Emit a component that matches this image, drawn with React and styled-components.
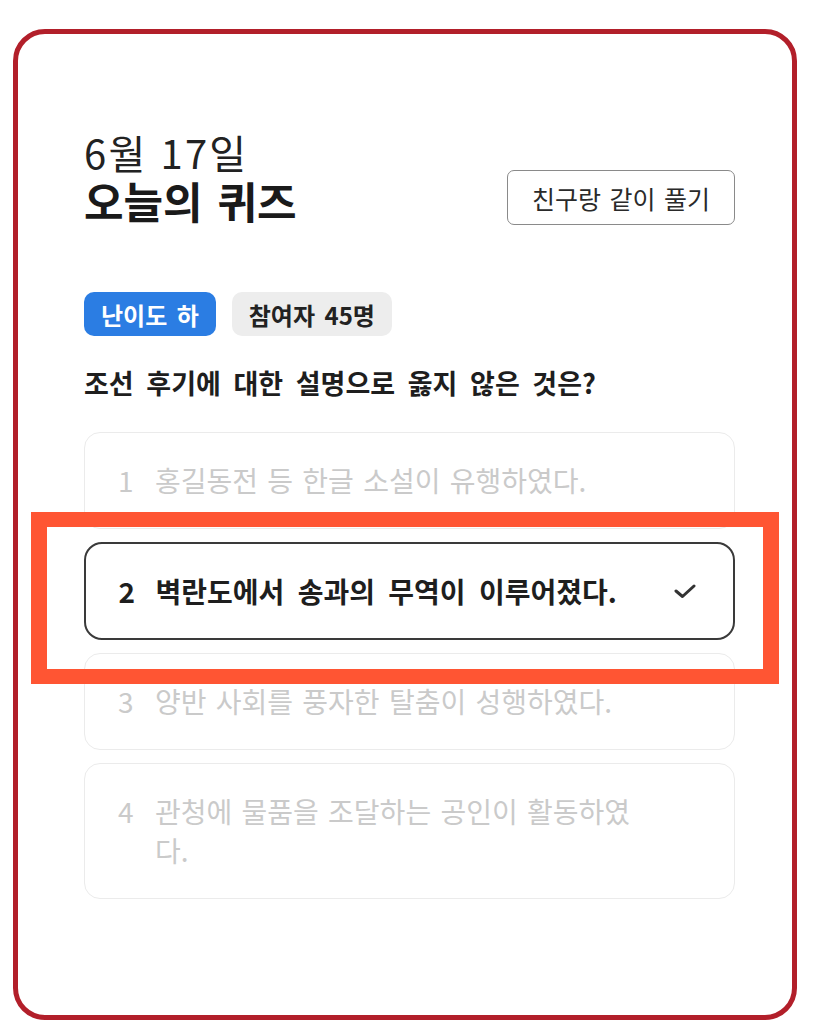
import React from 'react';
import styled, { createGlobalStyle } from 'styled-components';

const GlobalStyle = createGlobalStyle`
  * { box-sizing: border-box; }
  body {
    margin: 0;
    background: #ffffff;
    font-family: "Noto Sans CJK KR", "Noto Sans", sans-serif;
    color: #1e1e1e;
  }
`;

const Page = styled.div`
  position: relative;
  width: 819px;
  height: 1024px;
  padding: 29px 0 0 13px;
  overflow: hidden;
`;

const Frame = styled.div`
  width: 784px;
  height: 991px;
  border: 5px solid #b21f2a;
  border-radius: 32px;
  padding: 94px 57px 0 66px;
`;

const Header = styled.div`
  display: flex;
  justify-content: space-between;
  align-items: flex-end;
`;

const Titles = styled.div`
  display: flex;
  flex-direction: column;
`;

const DateLine = styled.div`
  font-size: 40px;
  font-weight: 400;
  line-height: 48px;
  color: #222;
  letter-spacing: 2.2px;
  word-spacing: 2px;
`;

const Title = styled.h1`
  margin: 0;
  font-size: 43px;
  font-weight: 700;
  line-height: 48px;
  color: #1a1a1a;
  word-spacing: 5px;
`;

const FriendButton = styled.button`
  width: 228px;
  height: 55px;
  margin-bottom: -1px;
  padding: 0;
  border: 1.5px solid #8a8a8a;
  border-radius: 7px;
  background: #fff;
  font-family: inherit;
  font-size: 25px;
  color: #2a2a2a;
  word-spacing: 3px;
`;

const Badges = styled.div`
  display: flex;
  gap: 16px;
  margin-top: 68px;
`;

const Badge = styled.span`
  display: inline-flex;
  align-items: center;
  height: 44px;
  padding: 0 17px;
  border-radius: 10px;
  font-size: 24px;
  font-weight: 700;
  word-spacing: 4px;
  background: ${({ $tone }) => ($tone === 'blue' ? '#2b7de3' : '#ededed')};
  color: ${({ $tone }) => ($tone === 'blue' ? '#ffffff' : '#222222')};
`;

const Question = styled.h2`
  margin: 30px 0 0;
  font-size: 27px;
  font-weight: 700;
  line-height: 34px;
  color: #1e1e1e;
  word-spacing: 6.5px;
`;

const Options = styled.div`
  display: flex;
  flex-direction: column;
  gap: 13px;
  margin-top: 32px;
`;

const Option = styled.div`
  display: flex;
  align-items: flex-start;
  padding: ${({ $selected }) => ($selected ? '27.5px 37.5px 27.5px 32.5px' : '28px 38px 28px 33px')};
  border: ${({ $selected }) => ($selected ? '2px solid #3a3a3a' : '1.5px solid #ebebeb')};
  border-radius: ${({ $selected }) => ($selected ? '18px' : '16px')};
  font-size: 28px;
  line-height: 39px;
  font-weight: ${({ $selected }) => ($selected ? 700 : 400)};
  color: ${({ $selected }) => ($selected ? '#1e1e1e' : '#cacaca')};
`;

const Num = styled.span`
  flex: 0 0 37px;
`;

const OptionText = styled.span`
  flex: 1;
  word-spacing: ${({ $selected }) => ($selected ? '7px' : '3px')};
`;

const CheckSlot = styled.span`
  flex: 0 0 22px;
  margin-left: 30px;
  height: 39px;
  display: flex;
  align-items: center;
`;

const Highlight = styled.div`
  position: absolute;
  left: 31px;
  top: 512px;
  width: 748px;
  height: 172px;
  border: 15px solid #ff5533;
  border-left-width: 16px;
  border-right-width: 16px;
  pointer-events: none;
`;

const options = [
  { n: 1, text: '홍길동전 등 한글 소설이 유행하였다.' },
  { n: 2, text: '벽란도에서 송과의 무역이 이루어졌다.', selected: true },
  { n: 3, text: '양반 사회를 풍자한 탈춤이 성행하였다.' },
  { n: 4, text: '관청에 물품을 조달하는 공인이 활동하였다.' },
];

const Check = () => (
  <svg width="22" height="16" viewBox="0 0 22 16" fill="none">
    <polyline points="2,8 8.5,13.5 20,3" stroke="#333" strokeWidth="3" strokeLinecap="round" strokeLinejoin="round" />
  </svg>
);

export default function App() {
  return (
    <Page>
      <GlobalStyle />
      <Frame>
        <Header>
          <Titles>
            <DateLine>6월 17일</DateLine>
            <Title>오늘의 퀴즈</Title>
          </Titles>
          <FriendButton>친구랑 같이 풀기</FriendButton>
        </Header>
        <Badges>
          <Badge $tone="blue">난이도 하</Badge>
          <Badge>참여자 45명</Badge>
        </Badges>
        <Question>조선 후기에 대한 설명으로 옳지 않은 것은?</Question>
        <Options>
          {options.map((o) => (
            <Option key={o.n} $selected={o.selected}>
              <Num>{o.n}</Num>
              <OptionText $selected={o.selected}>{o.text}</OptionText>
              <CheckSlot>{o.selected && <Check />}</CheckSlot>
            </Option>
          ))}
        </Options>
      </Frame>
      <Highlight />
    </Page>
  );
}
